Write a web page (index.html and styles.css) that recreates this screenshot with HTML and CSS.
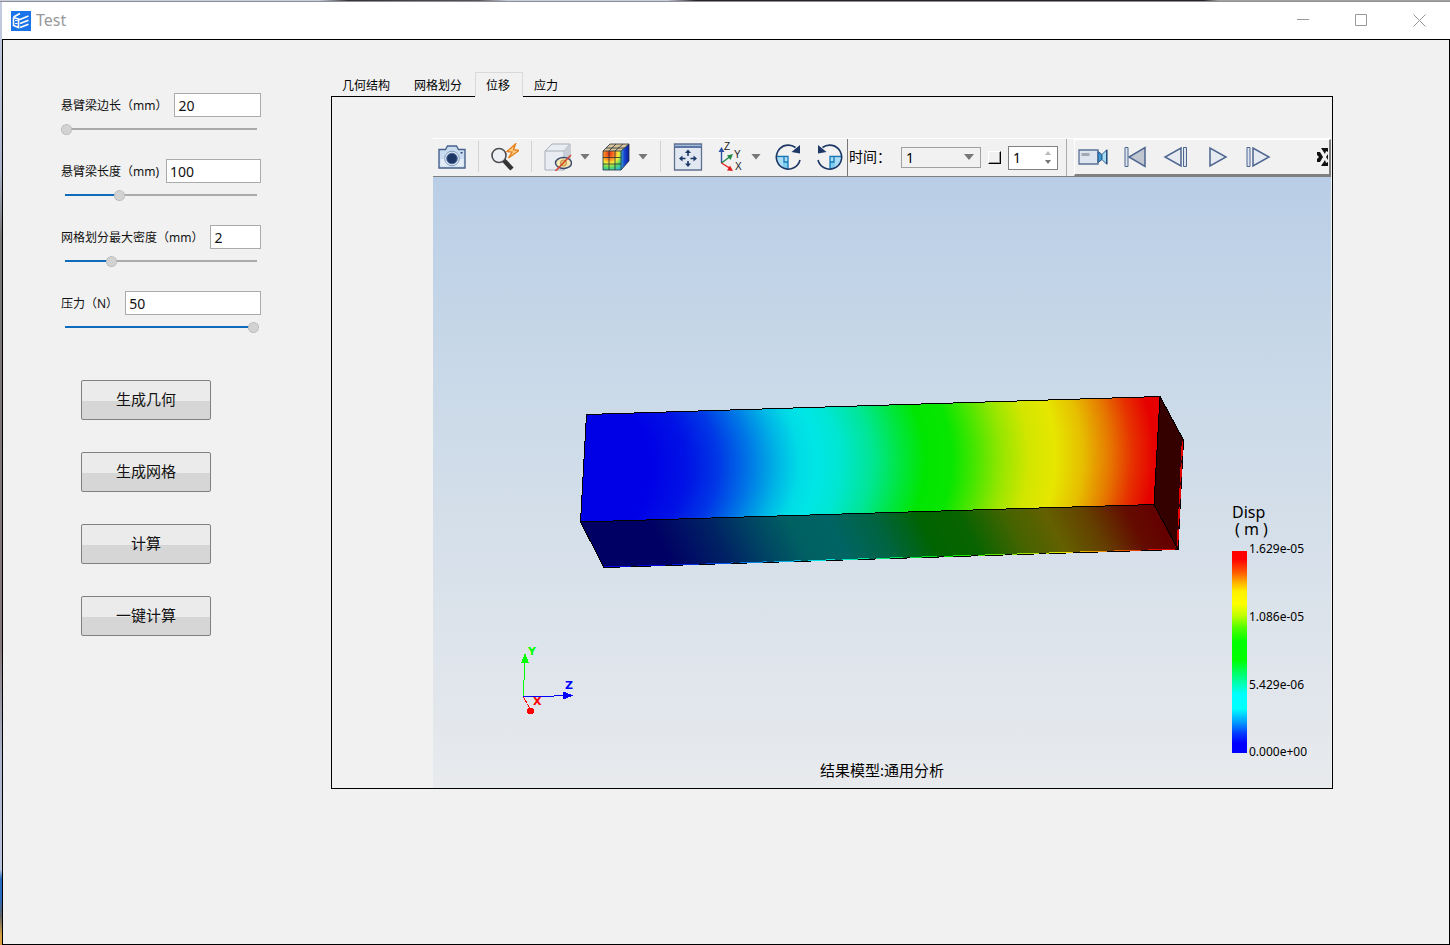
FILE: index.html
```html
<!DOCTYPE html>
<html lang="zh-CN">
<head>
<meta charset="utf-8">
<title>Test</title>
<link rel="stylesheet" href="styles.css">
</head>
<body>
<div class="window">
  <header class="titlebar">
    <svg class="app-icon" viewBox="0 0 20 20" aria-hidden="true">
      <rect width="20" height="20" fill="#1a73e8"/>
      <g fill="none" stroke="#fff" stroke-width="1.600">
        <path d="M2.500 6 9 2.500M2.500 6.500V14.500l5 2V8M2.500 6.500 9 8.500 17.500 5"/><path d="M9 12.500l8.500-3.200"/><path d="M9 16.500l8.500-3.200"/>
      </g>
      <path d="M4 9.500h2.500M4 12.500h2.500" stroke="#fff"/>
    </svg>
    <h1 class="title">Test</h1>
    <button class="win-btn" aria-label="最小化"><svg viewBox="0 0 13 13"><path d="M0 5.500h12"/></svg></button>
    <button class="win-btn" aria-label="最大化"><svg viewBox="0 0 13 13"><path d="M.5.5h11v11H.5z"/></svg></button>
    <button class="win-btn" aria-label="关闭"><svg viewBox="0 0 13 13"><path d="M.5.5l12 12M12.500.5l-12 12"/></svg></button>
  </header>

  <main class="content">
    <section class="controls">
      <div class="params">
        <div class="param">
          <div class="field"><label for="side">悬臂梁边长（mm）</label><input id="side" type="text" value="20"></div>
          <input class="slider" type="range" value="0" style="--fill:0%" aria-label="悬臂梁边长">
        </div>
        <div class="param">
          <div class="field"><label for="length">悬臂梁长度（mm)</label><input id="length" type="text" value="100"></div>
          <input class="slider" type="range" value="28" style="--fill:28%" aria-label="悬臂梁长度">
        </div>
        <div class="param">
          <div class="field"><label for="density">网格划分最大密度（mm）</label><input id="density" type="text" value="2"></div>
          <input class="slider" type="range" value="24" style="--fill:24%" aria-label="网格划分最大密度">
        </div>
        <div class="param">
          <div class="field"><label for="force">压力（N）</label><input id="force" type="text" value="50"></div>
          <input class="slider" type="range" value="99" style="--fill:95%" aria-label="压力">
        </div>
      </div>
      <div class="actions">
        <button>生成几何</button>
        <button>生成网格</button>
        <button>计算</button>
        <button>一键计算</button>
      </div>
    </section>

    <section class="results">
      <div class="tabs" role="tablist">
        <button class="tab" role="tab">几何结构</button>
        <button class="tab" role="tab">网格划分</button>
        <button class="tab selected" role="tab" aria-selected="true">位移</button>
        <button class="tab" role="tab">应力</button>
      </div>
      <div class="panel" role="tabpanel">
        <div class="toolbar">
          <div class="tools">
            <button class="tool" aria-label="截图">
              <svg viewBox="0 0 28 28">
                <path d="M1 6.500h6.500l2-3.500h9l2 3.500H27V25H1z" fill="#c9dbef" stroke="#47628c" stroke-width="1.400"/>
                <path d="M2.500 16h23v7.500h-23z" fill="#e3edf8"/>
                <circle cx="14" cy="15.500" r="7.300" fill="#e6eef8" stroke="#7f98bb"/>
                <circle cx="14" cy="15.500" r="5.300" fill="#1d3866" stroke="#4b6a9a"/>
                <path d="M22.500 9h2v1.500h-2z" fill="#29497c"/>
              </svg>
            </button>
            <span class="sep"></span>
            <button class="tool" aria-label="快速查找">
              <svg viewBox="0 0 28 28">
                <path d="M12.500 17 21 26" stroke="#333" stroke-width="4.500"/>
                <circle cx="8" cy="12.500" r="7" fill="#edf1f5" stroke="#4d4d52" stroke-width="1.600"/>
                <path d="M24.500 1 16 8.500l5 .5-3.500 6L28 7.500l-5.500-.8z" fill="#ffd08a" stroke="#e5801b" stroke-width="1.400"/>
              </svg>
            </button>
            <span class="sep"></span>
            <div class="drop">
              <button class="tool" aria-label="显示隐藏">
                <svg viewBox="0 0 28 28">
                  <path d="M1 8 8 1h18v17l-6 9H1z" fill="#e9edf3" stroke="#a8adb6"/>
                  <path d="M1 8h19v19M20 8l6-7" fill="none" stroke="#a8adb6"/>
                  <path d="M20 8l6-7v17l-6 8z" fill="#c8ced8"/>
                  <ellipse cx="19.500" cy="20" rx="8" ry="5.500" fill="#f8e8b8" stroke="#39496e" stroke-width="1.400"/>
                  <circle cx="19.500" cy="20" r="3" fill="#f0cf73" stroke="#b58b43"/>
                  <path d="M11.500 28 27 12" stroke="#d3422b" stroke-width="1.500"/>
                </svg>
              </button>
              <button class="arrow" aria-label="更多"></button>
            </div>
            <div class="drop">
              <button class="tool" aria-label="云图">
                <svg viewBox="0 0 28 28">
                  <defs>
                    <radialGradient id="cubeFace" cx=".35" cy=".15" r="1"><stop offset="0" stop-color="#e52b16"/><stop offset=".3" stop-color="#ff8c22"/><stop offset=".5" stop-color="#f6ee3a"/><stop offset=".72" stop-color="#59dc62"/><stop offset="1" stop-color="#24aee8"/></radialGradient>
                    <linearGradient id="cubeSide"><stop offset="0" stop-color="#3aa9ce"/><stop offset=".45" stop-color="#1642d0"/><stop offset="1" stop-color="#0c1d9c"/></linearGradient>
                  </defs>
                  <path d="M1 8h18v19H1z" fill="url(#cubeFace)"/>
                  <path d="M1 8 8 1h19l-8 7z" fill="#d8c49a"/>
                  <path d="M19 8l8-7v17l-8 9z" fill="url(#cubeSide)"/>
                  <path d="M1 8h18v19H1zM1 14.500h18M1 21h18M7 8v19M13 8v19M1 8l7-7h19v17l-8 9M19 8l8-7M7 8l7-7M13 8l8-7M4 5h18.500" fill="none" stroke="#25303a" stroke-width=".8"/>
                </svg>
              </button>
              <button class="arrow" aria-label="更多"></button>
            </div>
            <span class="sep"></span>
          </div>
          <div class="tools view-tools">
            <button class="tool" aria-label="适应窗口">
              <svg class="overflow" viewBox="0 0 28 28">
                <path d="M1.500 1h27v26h-27z" fill="#e2e8f1" stroke="#60708f" stroke-width="1.300"/>
                <path d="M2 1.500h26v3.500H2z" fill="#5b76a5"/><path d="M2 2.500h26" stroke="#a9bcd9"/>
                <path d="M15 6.500l3 3.500h-6zM15 24l3-3.500h-6zM6 15.500l3.500-3v6zM24 15.500l-3.500-3v6z" fill="#1d3866"/>
                <path d="M15 9v4M15 18v4M8.500 15.500h4M17.500 15.500h4" stroke="#1d3866" stroke-width="1.600"/>
              </svg>
            </button>
            <div class="drop">
              <button class="tool" aria-label="视图方向">
                <svg class="overflow" viewBox="0 0 28 28">
                  <path d="M6.500 20V7" stroke="#2c50a4" stroke-width="1.400"/><path d="M6.500 4l3 5h-6z" fill="#2c50a4"/>
                  <path d="M6.500 20l8-6" stroke="#1f8a45" stroke-width="1.400"/><path d="M18 11l-2.500 6-3.500-4.500z" fill="#1f8a45"/>
                  <path d="M6.500 20l8 5" stroke="#e02020" stroke-width="1.400"/><path d="M18 28l-6-.5 3-5z" fill="#e02020"/>
                  <g class="axis-mini"><text x="9" y="7">Z</text><text x="19" y="15">Y</text><text x="20" y="27">X</text></g>
                </svg>
              </button>
              <button class="arrow" aria-label="更多"></button>
            </div>
            <button class="tool" aria-label="顺时针旋转">
              <svg viewBox="0 0 28 28">
                <path d="M1.500 14.500H13V26A12 12 0 0 1 1.500 14.500z" fill="#a9ddf6"/><path d="M8 19h5v7l-5-2z" fill="#7fcdf0"/>
                <path d="M1.500 13.500H13V26M9 14v5h4" fill="none" stroke="#1579b8" stroke-width="1.300"/>
                <path d="M20.500 4.500A12 12 0 1 0 25 17" fill="none" stroke="#1d3866" stroke-width="1.600"/>
                <path d="M25 2v8.500l-8.500-1.500z" fill="#1d3866"/>
              </svg>
            </button>
            <button class="tool" aria-label="逆时针旋转">
              <svg viewBox="0 0 28 28">
                <path d="M25 14.500H13V26A12 12 0 0 0 25 14.500z" fill="#a9ddf6"/><path d="M18 19h-5v7l5-2z" fill="#7fcdf0"/>
                <path d="M25 13.500H13V26M17 14v5h-4" fill="none" stroke="#1579b8" stroke-width="1.300"/>
                <path d="M5.500 4.500A12 12 0 1 1 1 17" fill="none" stroke="#1d3866" stroke-width="1.600"/>
                <path d="M1 2v8.500l8.500-1.500z" fill="#1d3866"/>
              </svg>
            </button>
          </div>
          <div class="time">
            <label for="time">时间：</label>
            <span class="combo"><select id="time"><option>1</option></select></span>
            <input class="check" type="checkbox" aria-label="启用步数">
            <span class="spin">
              <input type="text" value="1" aria-label="步数">
              <span class="steps"><button class="up" aria-label="增加"></button><button class="down" aria-label="减少"></button></span>
            </span>
          </div>
          <div class="player">
            <button aria-label="录制" class="tool wide">
              <svg viewBox="0 0 30 28">
                <path d="M1 7h19v14H1z" fill="#dfe5ee" stroke="#5b7196" stroke-width="1.300"/><path d="M3.500 10h8v3h-8z" fill="#a3a9b2"/>
                <path d="M20 8.500l4 3v5l-4 3z" fill="#3b9bcf" stroke="#2b4d80"/><path d="M24 11.500l4.500-4.500v14L24 16.500z" fill="#a8dcf3" stroke="#2b5d94"/>
                <path d="M29 6.500v15" stroke="#1d3866"/>
              </svg>
            </button>
            <button aria-label="第一帧" class="tool"><svg viewBox="0 0 28 28"><path d="M4 4.500h3v19H4z" fill="#dfe5ee" stroke="#4e6690"/><path d="M24 4.500v19L8 14z" fill="#bfc6d0" stroke="#4e6690" stroke-width="1.500"/></svg></button>
            <button aria-label="上一帧" class="tool"><svg viewBox="0 0 28 28"><path d="M19 5v18L3 14z" fill="#e6ebf2" stroke="#4e6690" stroke-width="1.500"/><path d="M21.500 4.500h3v19h-3z" fill="#dfe5ee" stroke="#4e6690"/></svg></button>
            <button aria-label="播放" class="tool"><svg viewBox="0 0 28 28"><path d="M7 5v18l16-9z" fill="#e6ebf2" stroke="#4e6690" stroke-width="1.500"/></svg></button>
            <button aria-label="下一帧" class="tool"><svg viewBox="0 0 28 28"><path d="M3 4.500h3v19H3z" fill="#dfe5ee" stroke="#4e6690"/><path d="M9 5v18l16-9z" fill="#e6ebf2" stroke="#4e6690" stroke-width="1.500"/></svg></button>
            <button aria-label="更多工具" class="more"><svg viewBox="0 0 12 18"><path d="M1 4h3l3 5-3 5H1v-3l2-2-2-2z" fill="#111"/><path d="M5 0h7v4l-2-1-1 3zM5 18h7v-4l-2 1-1-3zM12 6v6l-2-3z" fill="#111"/></svg></button>
          </div>
        </div>

        <svg class="scene" viewBox="433 177 898 611" role="img" aria-label="位移云图">
          <defs>
            <radialGradient id="front" gradientUnits="userSpaceOnUse" cx="0" cy="0" r="900" gradientTransform="translate(300 476) rotate(-1.800) scale(1 .45)">
              <stop offset=".39" stop-color="#0000e6"/><stop offset=".43" stop-color="#0012e6"/><stop offset=".465" stop-color="#0038e6"/><stop offset=".5" stop-color="#0078e6"/><stop offset=".53" stop-color="#00b4e6"/>
              <stop offset=".555" stop-color="#00dce6"/><stop offset=".575" stop-color="#00e6e6"/><stop offset=".6" stop-color="#00e6d2"/><stop offset=".635" stop-color="#00e696"/><stop offset=".665" stop-color="#00e646"/>
              <stop offset=".695" stop-color="#00e600"/><stop offset=".725" stop-color="#08e600"/><stop offset=".75" stop-color="#46e600"/><stop offset=".78" stop-color="#96e600"/><stop offset=".81" stop-color="#d2e600"/>
              <stop offset=".84" stop-color="#e6e600"/><stop offset=".87" stop-color="#e6be00"/><stop offset=".9" stop-color="#e67800"/><stop offset=".925" stop-color="#e63200"/><stop offset=".95" stop-color="#e60000"/>
            </radialGradient>
            <linearGradient id="under" gradientUnits="userSpaceOnUse" x1="580" y1="0" x2="1160" y2="0" gradientTransform="translate(0 521) skewX(27)">
              <stop offset="0" stop-color="#000064"/><stop offset=".12" stop-color="#000064"/><stop offset=".22" stop-color="#002264"/><stop offset=".29" stop-color="#004464"/>
              <stop offset=".36" stop-color="#006062"/><stop offset=".43" stop-color="#006464"/><stop offset=".51" stop-color="#006440"/><stop offset=".59" stop-color="#006400"/><stop offset=".66" stop-color="#086400"/>
              <stop offset=".74" stop-color="#446400"/><stop offset=".81" stop-color="#646000"/><stop offset=".88" stop-color="#644000"/><stop offset=".95" stop-color="#640c00"/><stop offset="1" stop-color="#640000"/>
            </linearGradient>
            <linearGradient id="rim" gradientUnits="userSpaceOnUse" x1="604" y1="0" x2="1178" y2="0">
              <stop offset=".1" stop-color="#0000e6"/><stop offset=".25" stop-color="#0078e6"/><stop offset=".38" stop-color="#00e6e6"/><stop offset=".6" stop-color="#00e600"/><stop offset=".8" stop-color="#e6e600"/><stop offset=".97" stop-color="#e60000"/>
            </linearGradient>
            <linearGradient id="scale" x1="0" y1="0" x2="0" y2="1">
              <stop offset=".04" stop-color="#f00"/><stop offset=".11" stop-color="#ff6000"/><stop offset=".15" stop-color="#ffa800"/><stop offset=".2" stop-color="#fff000"/><stop offset=".26" stop-color="#ff0"/><stop offset=".32" stop-color="#c0ff00"/><stop offset=".38" stop-color="#50ff00"/>
              <stop offset=".45" stop-color="#0f0"/><stop offset=".54" stop-color="#0f0"/><stop offset=".6" stop-color="#00ff60"/><stop offset=".66" stop-color="#00ffb8"/><stop offset=".71" stop-color="#0ff"/><stop offset=".78" stop-color="#0ff"/><stop offset=".85" stop-color="#0098ff"/><stop offset=".9" stop-color="#0040ff"/><stop offset=".95" stop-color="#0000ff"/>
            </linearGradient>
          </defs>
          <path d="M586.500 414.500 1160 396.500 1154 504.500 580.500 522z" fill="url(#front)"/>
          <path d="M580.500 522 1154 504.500 1178 549.500 604 567.500z" fill="url(#under)"/>
          <path d="M1160 396.500 1183.500 440 1178 549.500 1154 504.500z" fill="#350000"/>
          <g class="edges" fill="none" stroke="#000">
            <path d="M586.500 414.500 1160 396.500 1154 504.500 580.500 522zM580.500 522 604 567.500 1178 549.500 1154 504.500M1160 396.500 1183.500 440 1178 549.500"/>
          </g>
          <path class="edges" d="M604 567 1176 549" stroke="url(#rim)" stroke-dasharray="27 7"/>
          <path class="edges" d="M1182.500 441 1177.500 546" stroke="#e60000" stroke-width="1.500" stroke-dasharray="19 3"/>

          <g class="triad">
            <path d="M523 680h1v16h-1zM524 660h1v20h-1z" fill="#0f0"/><path d="M525 653l4 10h-8z" fill="#0f0"/>
            <path d="M523 696h31v1h-31zM554 695h11v1h-11z" fill="#00f"/><path d="M573 695.500l-10-4v8z" fill="#00f"/>
            <path d="M523.500 697l6 11" stroke="#f00" stroke-dasharray="3 1"/><circle cx="530.500" cy="711" r="3.500" fill="#f00"/>
            <text x="528" y="655" fill="#0f0">Y</text><text x="565" y="689" fill="#00f">Z</text><text x="533" y="705" fill="#f00">X</text>
          </g>

          <text class="caption" x="820" y="776">结果模型:通用分析</text>
          <text class="legend-title"><tspan x="1232" y="518">Disp</tspan><tspan x="1235" y="535">( m )</tspan></text>
          <path d="M1232 551h15v202h-15z" fill="url(#scale)"/>
          <g class="legend-values">
            <text x="1249" y="553">1.629e-05</text>
            <text x="1249" y="621">1.086e-05</text>
            <text x="1249" y="689">5.429e-06</text>
            <text x="1249" y="756">0.000e+00</text>
          </g>
        </svg>
      </div>
    </section>
  </main>
</div>
</body>
</html>
```
FILE: styles.css
```css
* { box-sizing: border-box; }

body {
  margin: 0;
  min-height: 100vh;
  display: flex;
  padding: 2px 0 0 2px;
  font: 12px/16px "Noto Sans", "Noto Sans CJK SC", sans-serif;
  color: #111;
  background:
    linear-gradient(#8e8e96, #8e8e96) 0 1px / 100% 1px no-repeat,
    linear-gradient(90deg, #c8cede 22%, #333 24%, #555 33%, #c8cede 35%, #c8cede 46%, #2a2226 48%, #2a2226 83%, #a0a49a 84%) 0 0 / 100% 1px no-repeat,
    linear-gradient(#c4cce0 0%, #a9b2c8 18%, #777 25%, #85777a 68%, #aab4ca 80%, #b8c4dc 92%, #2a6cc0 93%, #2a6cc0 95%, #666 97%, #d8a040 99%);
}

button { border: 0; padding: 0; background: none; font: inherit; color: inherit; }
input, select { font: inherit; color: inherit; }

.window { flex: 1; min-width: 0; display: flex; flex-direction: column; }

.titlebar { display: flex; align-items: center; height: 37px; padding: 0 2px 0 9px; background: #fff; }
.app-icon { width: 20px; height: 20px; }
.title { flex: 1; margin: 0 0 0 5px; padding-bottom: 2px; font-size: 16px; line-height: 20px; font-weight: 400; color: #999; }
.win-btn { width: 58px; height: 37px; display: grid; place-items: center; }
.win-btn svg { width: 13px; height: 13px; fill: none; stroke: #999; }

.content {
  flex: 1;
  display: flex;
  align-items: flex-start;
  gap: 70px;
  padding: 32px 116px 32px 58px;
  border: 1px solid #000;
  background: #f1f1f1;
}

.controls { flex: none; width: 200px; padding-top: 21px; }
.params { display: grid; gap: 24px; }
.param { display: grid; grid-template-columns: minmax(0, 1fr); gap: 6px; }
.field { display: flex; align-items: center; gap: 7px; }
.field label { padding-top: 2px; white-space: nowrap; }
.field input {
  flex: 1;
  width: 0;
  min-width: 0;
  height: 24px;
  padding: 0 3px;
  border: 1px solid #ababab;
  background: #fff;
  font-size: 14px;
}

.slider {
  appearance: none;
  width: 100%;
  height: 12px;
  margin: 0;
  background:
    linear-gradient(#0f6cbd, #0f6cbd) 4px 5px / var(--fill) 2px no-repeat,
    linear-gradient(#ababab, #ababab) 4px 5px / calc(100% - 8px) 2px no-repeat;
}
.slider::-webkit-slider-thumb {
  appearance: none;
  width: 11px;
  height: 11px;
  border: 1px dotted #aaa;
  border-radius: 50%;
  background: #d2d2d2;
}

.actions { display: grid; gap: 32px; margin: 47px 50px 0 20px; }
.actions button {
  height: 40px;
  padding-bottom: 2px;
  border: 1px solid #808080;
  border-radius: 2px;
  background: linear-gradient(#ebebeb 52%, #d6d6d6 52%);
  font-size: 15px;
}

.results { flex: 1; min-width: 0; }
.tabs { display: flex; height: 25px; margin-bottom: -1px; }
.tab { padding: 2px 12px 0 10px; border: 1px solid transparent; color: #000; }
.tab.selected { position: relative; border-color: #d9d9d9; border-bottom-color: #f1f1f1; background: #f1f1f1; }
.panel { padding: 41px 1px 0 101px; border: 1px solid #000; }

.toolbar {
  display: flex;
  align-items: stretch;
  height: 39px;
  padding-left: 5px;
  border-top: 1px solid #fff;
  border-bottom: 1px solid #808080;
}
.tools { display: flex; align-items: center; gap: 12px; padding-bottom: 2px; }
.view-tools { gap: 14px; padding: 0 2px 2px 12px; }
.sep { width: 1px; height: 31px; background: #d2d2d2; }
.tool { width: 28px; height: 28px; }
.tool svg { display: block; width: 100%; height: 100%; }
.tool .overflow { overflow: visible; }
.tool.wide { width: 30px; }
.axis-mini { font: 10px "Liberation Sans", sans-serif; fill: #222; }
.drop { display: flex; align-items: center; gap: 8px; }
.arrow { width: 10px; height: 6px; background: #777; clip-path: polygon(0 0, 100% 0, 50% 100%); }

.time {
  display: flex;
  align-items: center;
  gap: 7px;
  padding: 0 8px 0 1px;
  border: solid #aaa;
  border-width: 0 1px;
  border-left-color: #777;
  font-size: 14px;
  color: #000;
}
.time label { padding: 0 3px 2px 0; white-space: nowrap; }
.combo { position: relative; width: 80px; }
.combo select {
  appearance: none;
  display: block;
  width: 100%;
  height: 21px;
  padding: 0 4px;
  border: 1px solid #a0a0a0;
  border-radius: 0;
  background: #f1f1f1;
}
.combo::after {
  content: "";
  position: absolute;
  top: 7px;
  right: 7px;
  width: 10px;
  height: 6px;
  background: #777;
  clip-path: polygon(0 0, 100% 0, 50% 100%);
}
.check {
  appearance: none;
  width: 13px;
  height: 13px;
  margin: 0;
  border: 1px solid #fff;
  border-right: 1px solid #000;
  border-bottom: 1px solid #000;
  box-shadow: inset -1px -1px #999;
}
.spin { display: flex; width: 50px; height: 24px; border: 1px solid #808080; background: #fff; }
.spin input { flex: 1; min-width: 0; padding: 0 4px; border: 0; background: none; }
.steps { display: grid; align-content: center; gap: 5px; padding-right: 6px; }
.steps button { width: 6px; height: 4px; background: #777; }
.steps .up { background: #bbb; clip-path: polygon(50% 0, 100% 100%, 0 100%); }
.steps .down { clip-path: polygon(0 0, 100% 0, 50% 100%); }

.player {
  flex: 1;
  display: flex;
  align-items: center;
  gap: 13px;
  min-width: 0;
  margin-left: 7px;
  padding: 0 1px 0 3px;
  border: solid #808080;
  border-width: 1px 2px 2px 1px;
  border-top-color: #fff;
  border-left-color: #fff;
}
.more { width: 12px; height: 18px; margin-left: auto; }
.more svg { display: block; }

.scene { display: block; width: 100%; background: linear-gradient(#b9cee6, #cad9e8 34%, #e8eaed); }
.edges { shape-rendering: crispEdges; }
.triad { font: bold 11px "DejaVu Sans", sans-serif; shape-rendering: crispEdges; }
.caption { font-size: 15px; }
.legend-title { font-size: 16px; fill: #000; }
.legend-values { font-size: 12px; }
```
